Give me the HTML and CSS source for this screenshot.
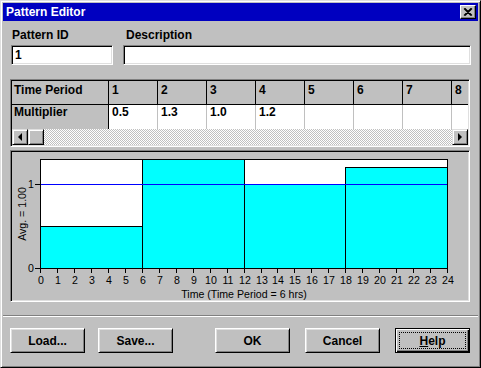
FILE: index.html
```html
<!DOCTYPE html>
<html lang="en">
<head>
    <meta charset="UTF-8">
    <title>Pattern Editor</title>
    <link rel="stylesheet" href="styles.css">
</head>
<body>
  <div class="window">
    <div class="titlebar">
      <span class="title">Pattern Editor</span>
      <div class="close-btn">
        <svg width="14" height="12" viewBox="0 0 14 12">
          <path d="M3 2.5L10 9.5M4 2.5L11 9.5M10 2.5L3 9.5M11 2.5L4 9.5" stroke="#000" stroke-width="1.1" fill="none"/>
        </svg>
      </div>
    </div>

    <div class="content">
      <!-- id + description -->
      <div class="fields">
        <div class="field field-id">
          <div class="label">Pattern ID</div>
          <div class="textbox">1</div>
        </div>
        <div class="field field-desc">
          <div class="label">Description</div>
          <div class="textbox"></div>
        </div>
      </div>

      <!-- multiplier grid -->
      <div class="grid">
        <div class="grid-row header-row">
          <div class="cell row-head">Time Period</div>
          <div class="cell">1</div>
          <div class="cell">2</div>
          <div class="cell">3</div>
          <div class="cell">4</div>
          <div class="cell">5</div>
          <div class="cell">6</div>
          <div class="cell">7</div>
          <div class="cell">8</div>
        </div>
        <div class="grid-row data-row">
          <div class="cell row-head">Multiplier</div>
          <div class="cell">0.5</div>
          <div class="cell">1.3</div>
          <div class="cell">1.0</div>
          <div class="cell">1.2</div>
          <div class="cell"></div>
          <div class="cell"></div>
          <div class="cell"></div>
          <div class="cell"></div>
        </div>
        <div class="hscroll">
          <div class="sb-btn">
            <svg width="14" height="14" viewBox="0 0 14 14"><polygon points="5,7 9,3 9,11" fill="#000"/></svg>
          </div>
          <div class="sb-btn"></div>
          <div class="sb-track"></div>
          <div class="sb-btn">
            <svg width="14" height="14" viewBox="0 0 14 14"><polygon points="9,7 5,3 5,11" fill="#000"/></svg>
          </div>
        </div>
      </div>

      <!-- chart -->
      <div class="chart-panel">
        <svg class="chart" width="456" height="148" viewBox="12 152 456 148">
          <rect x="40.5" y="159.5" width="407" height="109" fill="#fff" stroke="#000"/>
          <g fill="#00ffff" stroke="#000">
            <rect x="40.5" y="226.5" width="102" height="42"/>
            <rect x="142.5" y="159.5" width="102" height="109"/>
            <rect x="244.5" y="184.5" width="101" height="84"/>
            <rect x="345.5" y="167.5" width="102" height="101"/>
          </g>
          <line x1="41" y1="184.5" x2="447" y2="184.5" stroke="#0000ff"/>
          <path stroke="#000" fill="none" d="M35 184.5h5M35 268.5h5
            M40.5 269v4M57.5 269v4M74.5 269v4M91.5 269v4M108.5 269v4M125.5 269v4M142.5 269v4
            M159.5 269v4M176.5 269v4M193.5 269v4M210.5 269v4M227.5 269v4M244.5 269v4
            M261.5 269v4M277.5 269v4M294.5 269v4M311.5 269v4M328.5 269v4M345.5 269v4
            M362.5 269v4M379.5 269v4M396.5 269v4M413.5 269v4M430.5 269v4M447.5 269v4"/>
          <g class="axis-text" text-anchor="end">
            <text x="34" y="188">1</text>
            <text x="34" y="272">0</text>
          </g>
          <g class="axis-text" text-anchor="middle">
            <text x="41" y="284">0</text>
            <text x="58" y="284">1</text>
            <text x="75" y="284">2</text>
            <text x="92" y="284">3</text>
            <text x="109" y="284">4</text>
            <text x="126" y="284">5</text>
            <text x="143" y="284">6</text>
            <text x="160" y="284">7</text>
            <text x="177" y="284">8</text>
            <text x="194" y="284">9</text>
            <text x="211" y="284">10</text>
            <text x="228" y="284">11</text>
            <text x="245" y="284">12</text>
            <text x="262" y="284">13</text>
            <text x="278" y="284">14</text>
            <text x="295" y="284">15</text>
            <text x="312" y="284">16</text>
            <text x="329" y="284">17</text>
            <text x="346" y="284">18</text>
            <text x="363" y="284">19</text>
            <text x="380" y="284">20</text>
            <text x="397" y="284">21</text>
            <text x="414" y="284">22</text>
            <text x="431" y="284">23</text>
            <text x="448" y="284">24</text>
            <text x="244" y="298">Time (Time Period = 6 hrs)</text>
            <text x="0" y="0" transform="translate(26 214) rotate(-90)">Avg. = 1.00</text>
          </g>
        </svg>
      </div>

      <div class="separator"></div>

      <div class="buttons">
        <div class="btn btn-load">Load...</div>
        <div class="btn btn-save">Save...</div>
        <div class="btn btn-ok">OK</div>
        <div class="btn btn-cancel">Cancel</div>
        <div class="btn btn-help btn-default"><span class="focus-ring"><u>H</u>elp</span></div>
      </div>
    </div>
  </div>
</body>
</html>
```

FILE: styles.css
```css
body {
    margin: 0;
    background: #c0c0c0;
    font-family: "Liberation Sans", Arial, sans-serif;
}

.window {
    width: 481px;
    height: 368px;
    box-sizing: border-box;
    background: #c0c0c0;
    border: 1px solid;
    border-color: #dfdfdf #000 #000 #dfdfdf;
    box-shadow: inset 1px 1px #fff, inset -1px -1px #808080;
    padding: 2px;
}

/* title bar */
.titlebar {
    height: 18px;
    background: #0000c0;
    display: flex;
    align-items: center;
    justify-content: space-between;
    padding: 0 2px 0 3px;
}

.title {
    color: #fff;
    font-weight: bold;
    font-size: 12px;
}

.close-btn {
    width: 16px;
    height: 14px;
    box-sizing: border-box;
    background: #c0c0c0;
    border: 1px solid;
    border-color: #fff #000 #000 #fff;
    box-shadow: inset -1px -1px #808080;
    display: flex;
}

.content {
    padding: 0 7px;
}

/* fields */
.fields {
    display: flex;
    gap: 10px;
    margin-top: 7px;
    margin-left: 1px;
}

.label {
    font-size: 12px;
    font-weight: bold;
    line-height: 14px;
    height: 14px;
    margin-bottom: 3px;
}

.field-id .label {
    padding-left: 1px;
}

.field-desc .label {
    padding-left: 3px;
}

.textbox {
    height: 20px;
    box-sizing: border-box;
    background: #fff;
    border: 1px solid;
    border-color: #808080 #fff #fff #808080;
    box-shadow: inset 1px 1px #000, inset -1px -1px #dfdfdf;
    font-size: 12px;
    font-weight: bold;
    line-height: 18px;
    padding: 0 3px;
}

.field-id .textbox {
    width: 102px;
}

.field-desc .textbox {
    width: 348px;
}

/* grid */
.grid {
    margin-top: 14px;
    width: 460px;
    height: 68px;
    box-sizing: border-box;
    border: 1px solid;
    border-color: #808080 #fff #fff #808080;
    box-shadow: inset 1px 1px #000, inset -1px -1px #dfdfdf;
    padding: 1px;
    background: #fff;
}

.grid-row {
    display: flex;
    overflow: hidden;
    height: 24px;
}

.cell {
    flex: none;
    width: 49px;
    box-sizing: border-box;
    font-size: 12px;
    font-weight: bold;
    line-height: 14px;
    padding-left: 3px;
    border-right: 1px solid #c0c0c0;
}

.header-row .cell {
    background: #c0c0c0;
    border-right: 1px solid #000;
    border-bottom: 1px solid #000;
    padding-top: 2px;
}

.row-head {
    width: 97px;
    padding-left: 2px;
}

.data-row .row-head {
    background: #c0c0c0;
    border-right: 1px solid #000;
}

.hscroll {
    display: flex;
    height: 16px;
}

.sb-btn {
    flex: none;
    width: 16px;
    height: 16px;
    box-sizing: border-box;
    background: #c0c0c0;
    border: 1px solid;
    border-color: #dfdfdf #000 #000 #dfdfdf;
    box-shadow: inset 1px 1px #fff, inset -1px -1px #808080;
    display: flex;
}

.sb-track {
    flex: 1;
    background: repeating-conic-gradient(#c0c0c0 0 25%, #fff 0 50%) 0 0 / 2px 2px;
}

/* chart */
.chart-panel {
    margin-top: 3px;
    width: 460px;
    height: 152px;
    box-sizing: border-box;
    border: 1px solid;
    border-color: #808080 #fff #fff #808080;
    box-shadow: inset 1px 1px #000, inset -1px -1px #dfdfdf;
    padding: 1px;
}

.chart {
    display: block;
    shape-rendering: crispEdges;
}

.axis-text {
    font-family: "Liberation Sans", Arial, sans-serif;
    font-size: 10.6px;
    fill: #000;
}

.separator {
    margin: 13px -7px 0;
    border-top: 1px solid #808080;
    border-bottom: 1px solid #fff;
    height: 0;
}

/* buttons */
.buttons {
    display: flex;
    margin-top: 11px;
}

.btn {
    width: 75px;
    height: 25px;
    box-sizing: border-box;
    background: #c0c0c0;
    border: 1px solid;
    border-color: #fff #000 #000 #fff;
    box-shadow: inset 1px 1px #dfdfdf, inset -1px -1px #808080;
    display: flex;
    align-items: center;
    justify-content: center;
    font-size: 12px;
    font-weight: bold;
}

.btn-save {
    margin-left: 13px;
}

.btn-ok {
    margin-left: 42px;
}

.btn-cancel,
.btn-help {
    margin-left: 15px;
}

.btn-default {
    border-color: #000;
    box-shadow: inset 1px 1px #fff, inset -1px -1px #000, inset -2px -2px #808080;
    padding: 3px;
    align-items: stretch;
}

.focus-ring {
    flex: 1;
    border: 1px dotted #000;
    display: flex;
    align-items: center;
    justify-content: center;
}
```
